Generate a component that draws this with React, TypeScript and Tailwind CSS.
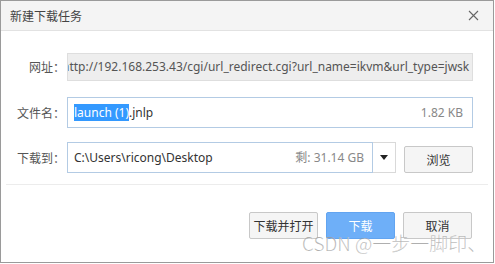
import React from "react";

const cjk = { fontFamily: '"Noto Sans CJK SC", "Noto Sans", sans-serif' };
const latin = { fontFamily: '"Noto Sans", "Noto Sans CJK SC", sans-serif' };

function Label({ children }: { children: React.ReactNode }) {
  return (
    <div className="w-[64px] shrink-0 text-right text-[12px] text-[#555]" style={cjk}>
      {children}
    </div>
  );
}

export default function App() {
  return (
    <div className="w-[495px] h-[264px] bg-white">
      <div className="relative w-[494px] h-[263px] border border-[#9a9a9a] bg-white flex flex-col">
        <div className="h-[30px] bg-[#f4f4f4] border-b border-[#e2e2e2] flex items-center justify-between pl-[9px] pr-[14px]">
          <span className="text-[12px] text-[#444]" style={cjk}>新建下载任务</span>
          <svg width="11" height="11" viewBox="0 0 11 11">
            <path d="M1 1 L10 10 M10 1 L1 10" stroke="#666" strokeWidth="1.1" />
          </svg>
        </div>

        <div className="flex flex-col pt-[22px]">
          <div className="flex items-center h-[28px]">
            <Label>网址：</Label>
            <div className="ml-[2px] w-[406px] h-[28px] bg-[#eeeeee] border border-[#dedede] flex items-center overflow-hidden whitespace-nowrap">
              <span className="ml-[-6px] text-[12px] text-[#555]" style={latin}>http://192.168.253.43/cgi/url_redirect.cgi?url_name=ikvm&amp;url_type=jwsk</span>
            </div>
          </div>

          <div className="flex items-center h-[31px] mt-[16px]">
            <Label>文件名：</Label>
            <div className="ml-[2px] w-[406px] h-[31px] bg-white border border-[#b3cbe4] flex items-center justify-between pl-[6px] pr-[9px] whitespace-nowrap">
              <span className="text-[12px] text-[#333]" style={latin}>
                <span className="bg-[#3399ff] text-white">launch (1)</span>.jnlp
              </span>
              <span className="text-[12px] text-[#888]" style={latin}>1.82 KB</span>
            </div>
          </div>

          <div className="flex items-center h-[31px] mt-[14px]">
            <Label>下载到：</Label>
            <div className="ml-[2px] w-[306px] h-[31px] bg-white border border-[#b3cbe4] flex items-center justify-between pl-[6px] pr-[8px] whitespace-nowrap">
              <span className="text-[12px] text-[#333]" style={latin}>C:\Users\ricong\Desktop</span>
              <span className="text-[12px] text-[#888]" style={latin}>剩: 31.14 GB</span>
            </div>
            <div className="w-[23px] h-[31px] border border-l-0 border-[#d9d9d9] flex items-center justify-center">
              <svg width="8" height="5" viewBox="0 0 8 5">
                <path d="M0 0 L8 0 L4 5 Z" fill="#222" />
              </svg>
            </div>
            <button className="ml-[8px] w-[69px] h-[27px] mt-[4px] bg-[#f5f5f5] border border-[#c8c8c8] rounded-[2px] text-[12px] text-[#333]" style={cjk}>
              浏览
            </button>
          </div>

          <div className="mx-[5px] mt-[11px] h-px bg-[#ececec]" />

          <div className="flex justify-end gap-[8px] mt-[27px] pr-[21px]">
            <button className="w-[69px] h-[27px] bg-[#f5f5f5] border border-[#c8c8c8] rounded-[2px] text-[12px] text-[#333]" style={cjk}>下载并打开</button>
            <button className="w-[69px] h-[27px] bg-[#6eaff8] border border-[#62a4f0] rounded-[2px] text-[12px] text-white" style={cjk}>下载</button>
            <button className="w-[69px] h-[27px] bg-[#f5f5f5] border border-[#c8c8c8] rounded-[2px] text-[12px] text-[#333]" style={cjk}>取消</button>
          </div>
        </div>

        <div className="absolute left-[301px] top-[231px] text-[19px] leading-[22px] font-light text-[#999]/80 whitespace-nowrap" style={{ ...cjk, WebkitTextStroke: "0.2px #fff" }}>
          CSDN @一步一脚印、
        </div>
      </div>
    </div>
  );
}
